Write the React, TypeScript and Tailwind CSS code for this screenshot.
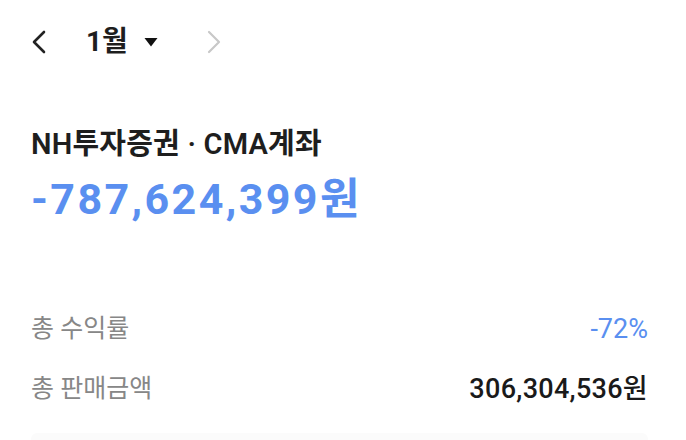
import React from "react";

export default function App() {
  const font = { fontFamily: 'Roboto, "Noto Sans CJK KR", sans-serif' };
  return (
    <div className="w-[686px] h-[440px] bg-white overflow-hidden relative" style={font}>
      <div className="pl-[31px] pr-[38px]">
        <div className="flex items-center h-[84px]">
          <svg width="16" height="24" viewBox="0 0 16 24">
            <path d="M13 2 L3 12 L13 22" fill="none" stroke="#222" strokeWidth="2.6" strokeLinecap="round" strokeLinejoin="round" />
          </svg>
          <span className="ml-[39px] text-[28px] font-bold text-[#1e1e1e] leading-none">1월</span>
          <svg width="14" height="10" viewBox="0 0 14 10" className="ml-[16px]">
            <path d="M0.5 1 L13.5 1 L7 9.5 Z" fill="#111" />
          </svg>
          <svg width="16" height="24" viewBox="0 0 16 24" className="ml-[48px]">
            <path d="M3 2 L13 12 L3 22" fill="none" stroke="#c8c8c8" strokeWidth="2.2" strokeLinecap="round" strokeLinejoin="round" />
          </svg>
        </div>
        <div className="mt-[42px] text-[29px] font-semibold text-[#1e1e1e] leading-[36px] tracking-[0.2px]">
          NH투자증권 · CMA계좌
        </div>
        <div className="mt-[9px] text-[43px] font-bold text-[#5a8ff0] leading-[56px] tracking-[2.4px]">
          -787,624,399원
        </div>
        <div className="mt-[82px] flex items-center justify-between h-[40px]">
          <span className="text-[25px] text-[#878787]">총 수익률</span>
          <span className="text-[27px] text-[#5a8ff0]">-72%</span>
        </div>
        <div className="mt-[20px] flex items-center justify-between h-[40px]">
          <span className="text-[25px] text-[#878787]">총 판매금액</span>
          <span className="text-[27px] font-medium text-[#1a1a1a] tracking-[0.3px]">306,304,536원</span>
        </div>
        <div className="mt-[24px] h-[20px] bg-[#fbfbfb] rounded-[6px]" />
      </div>
    </div>
  );
}
